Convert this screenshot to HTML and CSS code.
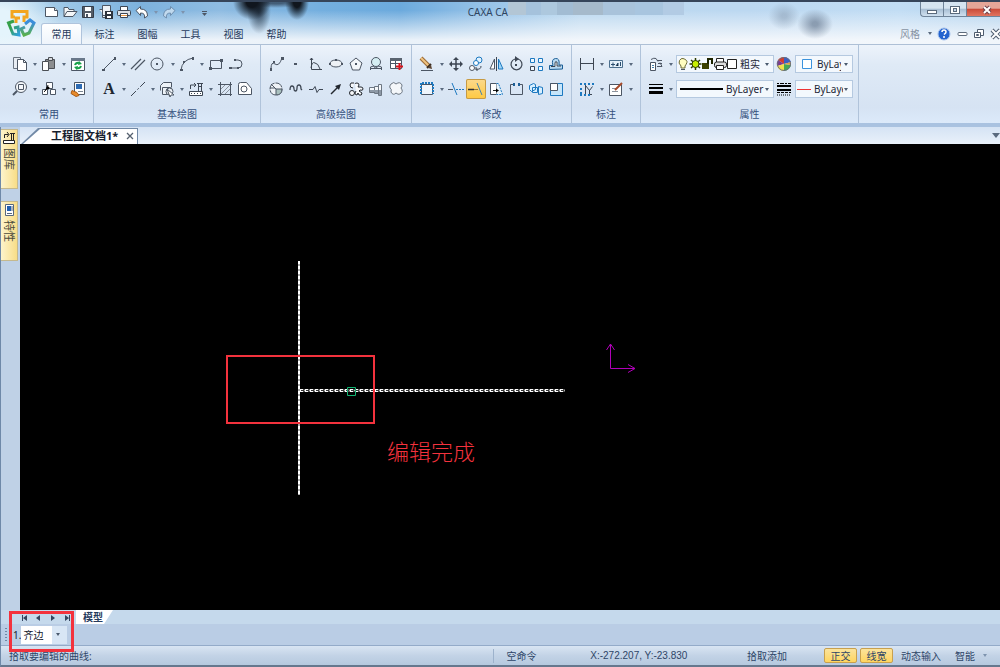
FILE: index.html
```html
<!DOCTYPE html>
<html lang="zh-CN">
<head>
<meta charset="utf-8">
<title>CAXA CAD</title>
<link rel="stylesheet" href="styles.css">
</head>
<body>
<div class="app">
<header class="titlebar">
  <svg class="logo" viewBox="0 0 32 32" aria-hidden="true"><defs><linearGradient id="lg" x2="1" y2="1"><stop offset=".3" stop-color="#35a04a"/><stop offset="1" stop-color="#2f9fe0"/></linearGradient><linearGradient id="lb" x2="0" y2="1"><stop offset=".2" stop-color="#3b8edb"/><stop offset="1" stop-color="#58b04c"/></linearGradient></defs><g fill="none" stroke-width="3"><path stroke="#f3a51f" d="M9.500 12.500V11H8V5.500h15V11h-3v5M12 17v-5h4"/><path stroke="url(#lg)" d="M10 15 4.500 17 9 28l6 1-1-8-4 1"/><path stroke="url(#lb)" d="m21 18 5-4 4 3-5 10-5 2-3-6 4-2"/></g></svg>
  <div class="titlemain">
    <div class="toprow">
      <div class="quick">
        <button class="qb" aria-label="新建"><svg viewBox="0 0 18 18"><path fill="#fff" stroke="#4c5664" d="M2.500 4.500h9l3 3v6h-12z"/><path fill="#dfe5ec" stroke="#4c5664" d="M11.500 4.500v3h3"/></svg></button>
        <button class="qb" aria-label="打开"><svg viewBox="0 0 18 18"><path fill="#f4f6f8" stroke="#4c5664" d="M3 13.500V4.500h4l1 2h5v2M3 13.500l3-5h10l-4 5z"/></svg></button>
        <button class="qb" aria-label="保存"><svg viewBox="0 0 18 18"><path fill="#535b66" stroke="#343c48" d="M3.500 3.500h11v11h-11z"/><path fill="#fff" d="M6 4h6v4H6zM6 10h6v4H6z"/><path fill="#4c5664" d="M7 11h2v3H7z"/></svg></button>
        <button class="qb" aria-label="另存为"><svg viewBox="0 0 18 18"><path fill="#eef2f6" stroke="#4c5664" d="M5.500 2.500h8v10h-8zM2.500 6.500h3v8h3"/><path fill="#2c323c" d="M8 8h8v8H8z"/><path fill="#fff" d="M10 9h4v2h-4zM10 13h4v2h-4z"/></svg></button>
        <button class="qb" aria-label="打印"><svg viewBox="0 0 18 18"><path fill="#fff" stroke="#3d4653" d="M5.500 3.500h7v4h-7z"/><rect x="2.500" y="7.500" width="13" height="5" rx="1" fill="#dbe1e8" stroke="#3d4653"/><path fill="#fff" stroke="#3d4653" d="M5.500 10.500h7v4h-7z"/><path stroke="#e59645" d="M6 12.500h6"/></svg></button>
        <button class="qb" aria-label="撤销"><svg viewBox="0 0 18 18"><path fill="#fff" stroke="#4c5664" d="M3 7.500 7.500 3.500v2.500q7 0 7 7l-3 2q1-5-4-5v2.500z"/></svg></button>
        <span class="caret faint"></span>
        <button class="qb dim" aria-label="重做"><svg viewBox="0 0 18 18"><path fill="#cfe2f2" stroke="#6885a4" d="M15 7.500 10.500 3.500v2.500q-7 0-7 7l3 2q-1-5 4-5v2.500z"/></svg></button>
        <span class="caret faint"></span>
        <button class="qb more" aria-label="自定义快速访问"><svg viewBox="0 0 18 18"><path stroke="#4c5664" d="M7 8.500h5"/><path fill="#4c5664" d="M7 10h5l-2.500 3z"/></svg></button>
      </div>
      <div class="caption">CAXA CA</div>
      <div class="mosaic"></div>
      <div class="winctl">
        <button aria-label="最小化"><svg viewBox="0 0 18 16"><rect x="4.500" y="8.500" width="9" height="3" fill="#fff" stroke="#5b6b7d"/></svg></button>
        <button aria-label="最大化"><svg viewBox="0 0 18 16"><rect x="4.500" y="4.500" width="9" height="7" fill="#fff" stroke="#5b6b7d"/><rect x="7.500" y="6.500" width="3" height="3" fill="#c7d8e8" stroke="#5b6b7d"/></svg></button>
        <button class="close" aria-label="关闭"><svg viewBox="0 0 18 16"><path stroke="#71404a" stroke-width="4" d="m6 5 6 6M12 5l-6 6"/><path stroke="#fff" stroke-width="2" d="m6 5 6 6M12 5l-6 6"/></svg></button>
      </div>
    </div>
    <nav class="tabs">
      <button class="tab on">常用</button><button class="tab">标注</button><button class="tab">图幅</button><button class="tab">工具</button><button class="tab">视图</button><button class="tab">帮助</button>
      <div class="tabright">
        <button class="style">风格</button><span class="caret"></span>
        <button class="tb" aria-label="帮助"><svg viewBox="0 0 16 16"><circle cx="8" cy="8" r="6" fill="#2464cf" stroke="#a7c3ec"/><path d="M6 6q0-2 2-2t2 2q0 1-2 2.500M8 10v2" fill="none" stroke="#fff" stroke-width="1.500"/></svg></button>
        <button class="tb" aria-label="最小化文档"><svg viewBox="0 0 16 16"><rect x="4" y="6.500" width="9" height="3" rx="1" fill="#fff" stroke="#5d6b7c"/></svg></button>
        <button class="tb" aria-label="还原文档"><svg viewBox="0 0 16 16"><g fill="#fff" stroke="#4e5c6e"><path d="M6.500 3.500h6v6h-6z"/><path d="M3.500 6.500h6v5h-6z"/><path d="M5.500 8.500h2v1h-2z"/></g></svg></button>
        <button class="tb" aria-label="关闭文档"><svg viewBox="0 0 16 16"><path stroke="#4e5c6e" stroke-width="4" d="m4 4 8 8M12 4l-8 8"/><path stroke="#fff" stroke-width="2" d="m4 4 8 8M12 4l-8 8"/></svg></button>
      </div>
    </nav>
  </div>
</header>

<section class="ribbon">
  <div class="group first"><div class="tools">
    <div class="line">
      <button class="ib" aria-label="复制"><svg viewBox="0 0 20 20"><path fill="#e8edf3" stroke="#6c7682" d="M3.500 3.500h7v11h-7z"/><path fill="#fff" stroke="#4c5664" d="M7.500 5.500h6l3 3v8h-9z"/><path fill="none" stroke="#4c5664" d="M13.500 5.500v3h3"/></svg></button><span class="caret"></span>
      <button class="ib" aria-label="粘贴"><svg viewBox="0 0 20 20"><path fill="#8b8d8f" stroke="#4b4f55" d="M6.500 5.500h9v9h-9z"/><path fill="#d7dade" stroke="#4b4f55" d="M9.500 3.500h4v3h-4z"/><path fill="#fff" stroke="#4b4f55" d="M3.500 7.500h6v9h-6z"/></svg></button><span class="caret"></span>
      <button class="ib" aria-label="刷新"><svg viewBox="0 0 20 20"><path fill="#fff" stroke="#4c5664" d="M3.500 4.500h13v12h-13z"/><path fill="#69788a" d="M3 4h14v3H3z"/><path fill="none" stroke="#18a048" stroke-width="2" d="M7 11q1-3 5-2M13 12q-1 3-5 2"/><path fill="#18a048" d="m11 7 3 3-4 1zM9 16l-3-3 4-1z"/></svg></button>
    </div>
    <div class="line">
      <button class="ib" aria-label="缩放"><svg viewBox="0 0 20 20"><circle cx="11" cy="8" r="5.500" fill="#f4f7fa" stroke="#4c5664"/><path stroke="#4c5664" stroke-width="2" d="m7 12-4 4"/><path fill="none" stroke="#4c5664" d="M8.500 5.500h5v5h-5z"/></svg></button><span class="caret"></span>
      <button class="ib" aria-label="块"><svg viewBox="0 0 20 20"><g fill="#fff" stroke="#4c5664"><path d="M7.500 3.500h6v6h-6z"/><path d="M3.500 10.500h5v5h-5zM11.500 10.500h5v5h-5z"/></g><path stroke="#222" d="m9 6-1 4-3 3"/><circle cx="9" cy="9" r="1.500"/></svg></button><span class="caret"></span>
      <button class="ib" aria-label="特性匹配"><svg viewBox="0 0 20 20"><path fill="#fff" stroke="#4c5664" d="M6.500 3.500h10v12h-10z"/><path fill="#2d6bb3" d="M8 5h6v5H8z"/><path stroke="#7b8692" d="M10 12.500h5"/><path fill="#e88b2b" stroke="#a85b16" d="M4 11.500l5 2 2 3-3 1-5-3z"/></svg></button>
    </div></div><div class="gname">常用</div>
  </div>
  <div class="group"><div class="tools">
    <div class="line">
      <button class="ib" aria-label="直线"><svg viewBox="0 0 20 20"><path stroke="#4c5664" d="M4 16 16 4"/><path fill="#4c5664" d="M3 15h3v2H3zM15 3h2v3h-2z"/></svg></button><span class="caret"></span>
      <button class="ib" aria-label="平行线"><svg viewBox="0 0 20 20"><path stroke="#4c5664" stroke-width="1.200" d="M3 15 13 5M7 16 17 6"/></svg></button>
      <button class="ib" aria-label="圆"><svg viewBox="0 0 20 20"><circle cx="9" cy="10" r="6" fill="none" stroke="#4c5664"/><path fill="#4c5664" d="M8 9h2v2H8z"/></svg></button><span class="caret"></span>
      <button class="ib" aria-label="圆弧"><svg viewBox="0 0 20 20"><path fill="none" stroke="#4c5664" d="M4 16Q5 6 16 4"/><path fill="#4c5664" d="M3 15h3v2H3zM15 3h2v3h-2zM6 7h2v2H6z"/></svg></button><span class="caret"></span>
      <button class="ib" aria-label="矩形"><svg viewBox="0 0 20 20"><path fill="none" stroke="#4c5664" d="M4.500 6.500h11v8h-11z"/><path fill="#4c5664" d="M14 5h3v3h-3zM3 13h3v3H3z"/></svg></button>
      <button class="ib" aria-label="多段线"><svg viewBox="0 0 20 20"><path fill="none" stroke="#4c5664" d="M9 6h3q4 0 4 4t-4 4H5"/><path fill="#4c5664" d="M8 5h2v2H8zM3 13h3v2H3zM11 13h2v2h-2z"/></svg></button>
    </div>
    <div class="line">
      <button class="ib letter">A</button><span class="caret"></span>
      <button class="ib" aria-label="中心线"><svg viewBox="0 0 20 20"><path stroke="#3d4653" stroke-dasharray="7 2 2 2" d="M3 17 17 3"/></svg></button><span class="caret"></span>
      <button class="ib" aria-label="块插入"><svg viewBox="0 0 20 20"><g fill="#edf2f7" stroke="#4c5664"><path d="M3.500 11.500v-5l3-3h8v5"/><path d="M5.500 8.500h8v7h-8z"/><circle cx="12.500" cy="12.500" r="3.500"/></g><path fill="#fff" stroke="#4c5664" d="m10 10 7 6h-3l-1 2z"/></svg></button><span class="caret"></span>
      <button class="ib" aria-label="图库"><svg viewBox="0 0 20 20"><path fill="none" stroke="#3d4653" d="M4.500 10v-4h5M8 4l2 2-2 2M11 4.500h6M12.500 5v7M15.500 5v7M12 7.500h4"/><path fill="#fff" stroke="#3d4653" d="M3.500 12.500h13v4h-13z"/><path stroke="#3d4653" stroke-dasharray="1 2" d="M5 14.500h11"/></svg></button><span class="caret"></span>
      <button class="ib" aria-label="剖面线"><svg viewBox="0 0 20 20"><path fill="none" stroke="#4c5664" d="M5.500 3v14M15.500 3v14M3 5.500h14M3 15.500h14"/><path stroke="#8a939e" d="m6 10 4-4M6 15l9-9M10 15l5-5"/></svg></button>
      <button class="ib" aria-label="局部放大"><svg viewBox="0 0 20 20"><path fill="#fff" stroke="#4c5664" d="M3.500 5.500q0-2 2-2h6l5 6v6h-13z"/><circle cx="9" cy="10" r="3" fill="none" stroke="#4c5664"/></svg></button>
    </div></div><div class="gname">基本绘图</div>
  </div>
  <div class="group"><div class="tools">
    <div class="line">
      <button class="ib" aria-label="样条"><svg viewBox="0 0 20 20"><path fill="none" stroke="#4c5664" d="M5 15Q5 7 9 10t7-6"/><path fill="#4c5664" d="M4 14h2v3H4zM15 3h3v3h-3zM7 7h2v2H7z"/></svg></button>
      <button class="ib" aria-label="点"><svg viewBox="0 0 20 20"><path fill="#4c5664" d="M8 9h3v2H8z"/></svg></button>
      <button class="ib" aria-label="公式曲线"><svg viewBox="0 0 20 20"><path fill="none" stroke="#3d4653" d="M5.500 4v11.500H16M4 6l1.500-2L7 6M5 14q1-7 4-5 3 0 5 6"/></svg></button>
      <button class="ib" aria-label="椭圆"><svg viewBox="0 0 20 20"><ellipse cx="10" cy="9.500" rx="6" ry="3.500" fill="#eef2f6" stroke="#4c5664"/><path fill="#4c5664" d="M3 9h2v2H3zM15 9h2v2h-2zM9 5h2v2H9z"/></svg></button>
      <button class="ib" aria-label="多边形"><svg viewBox="0 0 20 20"><path fill="#f3f6f9" stroke="#4c5664" d="m10 4 6 5-2.500 7h-7L4 9z"/><path fill="#4c5664" d="M9 9h2v2H9z"/></svg></button>
      <button class="ib" aria-label="圆弧拟合"><svg viewBox="0 0 20 20"><circle cx="10" cy="8" r="4.500" fill="#d5eef3" stroke="#4c5664"/><path fill="none" stroke="#4c5664" d="M4.500 16v-3l3-1q2 4 5 0l3 1v3M4 14.500h12"/></svg></button>
      <button class="ib" aria-label="表格"><svg viewBox="0 0 20 20"><path fill="#fff" stroke="#4c5664" d="M4.500 4.500h11v10h-11zM4 9.500h11M9.500 7v7"/><path fill="#5a6470" d="M4 4h12v3H4z"/><path stroke="#d8141e" stroke-width="2" d="M13.500 9v7M10 12.500h7"/></svg></button>
    </div>
    <div class="line">
      <button class="ib" aria-label="圆弧槽"><svg viewBox="0 0 20 20"><circle cx="10" cy="10" r="6" fill="#eef2f6" stroke="#4c5664" stroke-dasharray="8 1"/><path fill="#a9c0be" stroke="#4c5664" d="M10 10h6q0 6-6 6z"/><path fill="none" stroke="#4c5664" d="m5 5 5 5M4 9h5"/></svg></button>
      <button class="ib" aria-label="波浪线"><svg viewBox="0 0 20 20"><path fill="none" stroke="#3d4653" stroke-width="1.300" d="M4 11q0-4 2-4t2 3q0 2 1.500 2t1.500-3q0-3 2-3t2 4l1 1"/></svg></button>
      <button class="ib" aria-label="折断线"><svg viewBox="0 0 20 20"><path fill="none" stroke="#3d4653" d="M3 10.500h4l2-3 2 6 2-3h4"/></svg></button>
      <button class="ib" aria-label="箭头"><svg viewBox="0 0 20 20"><path stroke="#22272e" stroke-width="1.500" d="m5 15 7-7"/><path fill="#22272e" d="m15 5-2 6-4-4z"/></svg></button>
      <button class="ib" aria-label="齿轮"><svg viewBox="0 0 20 20"><g fill="#f7f9fb" stroke="#22272e"><path d="M9 5q0-1 2-1t2 2l-1 2h3q2 0 2 2t-3 1l-1 1 3 2q0 3-3 2l-1-2-1 2q-2 0-2-2l1-2"/><circle cx="6" cy="14" r="2.500"/><path d="M8 4Q4 3 4 6t3 3"/></g></svg></button>
      <button class="ib" aria-label="轴"><svg viewBox="0 0 20 20"><path fill="#f4f7fa" stroke="#6c7682" d="M3.500 8.500h5v5h-5zM8.500 7.500h4v7h-4zM12.500 5.500h3v11h-3z"/><path fill="#8e99a6" d="M4 11h5v2H4zM9 11h3v3H9zM13 11h2v5h-2z"/></svg></button>
      <button class="ib" aria-label="云线"><svg viewBox="0 0 20 20"><path fill="#f4f7fa" stroke="#6c7682" d="M5 5q3-3 5 0 4-3 6 1 0 2-1 3 3 4-1 6-2 1-4-1-3 3-5-1 1-3-1-4-1-2 1-4z"/></svg></button>
    </div></div><div class="gname">高级绘图</div>
  </div>
  <div class="group"><div class="tools">
    <div class="line">
      <button class="ib" aria-label="删除"><svg viewBox="0 0 20 20"><path stroke="#9b6a38" stroke-width="4" d="m4 4 8 8"/><path stroke="#f0c481" stroke-width="2" d="m4 4 8 8"/><path stroke="#3a2c20" stroke-width="2" d="m10 14 4-4"/><path fill="#5b4330" d="m11 14 3-3 1 4z"/><path stroke="#4c5664" d="M4 16.500h12"/></svg></button><span class="caret"></span>
      <button class="ib" aria-label="平移"><svg viewBox="0 0 20 20"><path stroke="#3d4653" stroke-width="1.500" d="M10 4v12M4 10h12"/><path fill="#3d4653" d="m10 3 3 3H7zM10 17l3-3H7zM3 10l3-3v6zM17 10l-3-3v6z"/></svg></button>
      <button class="ib" aria-label="平移复制"><svg viewBox="0 0 20 20"><circle cx="13" cy="6" r="3" fill="#e1f2ff" stroke="#1d79c0"/><circle cx="10" cy="9" r="2.500" fill="#fff" stroke="#1d79c0"/><circle cx="6" cy="14" r="2.500" fill="#fff" stroke="#4c5664"/><path fill="none" stroke="#3d4653" d="M10 15q5 1 5-3M10 13v3h2"/></svg></button>
      <button class="ib" aria-label="镜像"><svg viewBox="0 0 20 20"><path fill="#fff" stroke="#4c5664" d="M8.500 5v10H4z"/><path fill="#9ed5f7" stroke="#1d79c0" d="M12.500 5v10H17z"/><path stroke="#3d4653" d="M10.500 3v14"/></svg></button>
      <button class="ib" aria-label="旋转"><svg viewBox="0 0 20 20"><path fill="none" stroke="#3d4653" stroke-width="1.200" d="M9 5a5.500 5.500 0 1 0 3 0"/><path fill="#3d4653" d="M9 2l4 3-4 3zM9 10h2v2H9z"/></svg></button>
      <button class="ib" aria-label="阵列"><svg viewBox="0 0 20 20"><g fill="#eff8ff" stroke="#1d79c0"><path d="M4.500 4.500h4v4h-4zM12.500 4.500h4v4h-4zM12.500 12.500h4v4h-4z"/><path stroke="#3d4653" d="M4.500 12.500h4v4h-4z"/></g></svg></button>
      <button class="ib" aria-label="偏移"><svg viewBox="0 0 20 20"><path fill="#b6d9f2" stroke="#1d5f96" d="M3.500 15.500v-4H7Q5 5 9.500 4.500T13 11h3.500v4z"/><path fill="#fff" stroke="#3d4653" d="M5 12.500h4V9q0-2 2-1v4h4"/></svg></button>
    </div>
    <div class="line">
      <button class="ib" aria-label="拉伸"><svg viewBox="0 0 20 20"><path fill="#eef5fc" stroke="#4c5664" d="M4.500 5.500h11v10h-11z"/><path fill="none" stroke="#1d79c0" stroke-width="2" stroke-dasharray="2 1" d="M4 15V4h12v11"/></svg></button><span class="caret"></span>
      <button class="ib" aria-label="裁剪"><svg viewBox="0 0 20 20"><path stroke="#1d79c0" d="m6 4 5 12"/><path stroke="#4c5664" d="M2 10.500h5"/><path stroke="#1d79c0" stroke-dasharray="2 1" d="M10 10.500h8"/></svg></button>
      <button class="ib picked" aria-label="齐边"><svg viewBox="0 0 20 20"><path stroke="#333" stroke-width="1.500" d="M2 10.500h6"/><path stroke="#8d7741" d="M8 10.500h4"/><path stroke="#4382ad" d="m11 4 5 12"/></svg></button>
      <button class="ib" aria-label="过渡"><svg viewBox="0 0 20 20"><path fill="#fff" stroke="#4c5664" d="M4.500 4.500h6v11h-6z"/><path fill="#e7f4fd" stroke="#1d79c0" stroke-dasharray="2 1" d="M10.500 4.500h2l4 11h-6"/><path stroke="#222" d="M7 11.500h5"/><path d="m13 11.500-3-2v4z"/></svg></button>
      <button class="ib" aria-label="打断"><svg viewBox="0 0 20 20"><path fill="none" stroke="#4c5664" d="M7 5.500H4.500v10h12v-10H14"/><path fill="#1d5f96" d="M7 4h2v3H7zM12 4h2v3h-2z"/></svg></button>
      <button class="ib" aria-label="分解"><svg viewBox="0 0 20 20"><g fill="#d8efff" stroke="#1d79c0"><path d="m3.500 6.500 4-2 2 1v5l-4 2-2-2zM6.500 8.500h5v5h-5zM12.500 7.500l4 1v6l-4 1z"/></g></svg></button>
      <button class="ib" aria-label="缩放图形"><svg viewBox="0 0 20 20"><path fill="#c6e5fa" stroke="#1d79c0" d="M4.500 4.500h12v12h-12z"/><path fill="#fff" stroke="#4c5664" d="M4.500 4.500h7v7h-7z"/></svg></button>
    </div></div><div class="gname">修改</div>
  </div>
  <div class="group"><div class="tools">
    <div class="line">
      <button class="ib" aria-label="尺寸"><svg viewBox="0 0 20 20"><path fill="none" stroke="#3d4653" d="M3.500 4v12M16.500 4v12M4 9.500h12"/></svg></button><span class="caret"></span>
      <button class="ib" aria-label="公差"><svg viewBox="0 0 20 20"><path fill="#e4f0fa" stroke="#4b6f8e" d="M3.500 6.500h13v7h-13z"/><path stroke="#2b4f70" d="M5 10.500h4M7 8.500v4M10 12l2-3v3M14.500 8v4"/></svg></button><span class="caret"></span>
    </div>
    <div class="line">
      <button class="ib" aria-label="坐标标注"><svg viewBox="0 0 20 20"><path fill="none" stroke="#3d4653" d="M8.500 5v11M8.500 6.500l4 5 3-4M12.500 11v4.500H15"/><path stroke="#1d79c0" stroke-width="2" stroke-dasharray="2 2" d="M3 5h14M4 9v8M3 16h12"/></svg></button><span class="caret"></span>
      <button class="ib" aria-label="标注编辑"><svg viewBox="0 0 20 20"><path fill="#fff" stroke="#4c5664" d="M3.500 5.500h12v11h-12z"/><path stroke="#8a939e" d="M6 9.500h4M6 12.500h6"/><path stroke="#a64a2a" stroke-width="2" d="m9 11 7-7"/></svg></button><span class="caret"></span>
    </div></div><div class="gname">标注</div>
  </div>
  <div class="group"><div class="tools">
    <div class="line">
      <button class="ib" aria-label="图层"><svg viewBox="0 0 20 20"><path fill="#fff" stroke="#4c5664" d="M4.500 8.500h5v8h-5z"/><path fill="none" stroke="#4c5664" d="M5 5.500q3-2 5-1l2 3M11 6.500h5M12 9.500h4M11 12.500h5l-2-4"/><path stroke="#4382ad" d="M6 11.500h2M6 13.500h2"/></svg></button><span class="caret"></span>
      <label class="combo wide"><svg class="layer" viewBox="0 0 60 16" aria-hidden="true"><path fill="#fffdc0" stroke="#6c6a36" d="M4 10Q1 7 2.500 4.500T6 2.500t3.500 2T8 10v2H4z"/><path stroke="#4c5664" d="M4 13.500h4"/><path stroke="#2d3c00" stroke-width="1.500" d="M18.500 2v12M12.500 8h12M14 4l9 8M23 4l-9 8"/><circle cx="18.500" cy="8" r="3.500" fill="#c8f000" stroke="#2d3c00"/><path fill="#3b4100" d="M25 7h7v6h-7z"/><path fill="none" stroke="#1f2500" stroke-width="2" d="M31 8V3h4v5"/><path fill="#fff" stroke="#222" d="M39.500 2.500h7v4h-7z"/><rect x="37.500" y="6" width="12" height="5.500" rx="2" fill="#ddd" stroke="#222"/><path fill="#fff" stroke="#222" d="M39.500 9.500h7v4h-7z"/><path fill="#fff" stroke="#222" d="M50.500 3.500h9v9h-9z"/></svg><select aria-label="图层"><option>粗实</option></select></label>
      <button class="ib" aria-label="颜色"><svg viewBox="0 0 20 20"><path fill="#d63c2e" d="M10 10 4 6q2-3 6-3z"/><path fill="#3b5fc4" d="M10 10V3q5 0 7 5z"/><path fill="#7c3a92" d="M10 10 3 12q-1-3 1-6z"/><path fill="#f2df4a" d="M10 10l-7 2q2 5 7 5z"/><path fill="#45a954" d="M10 10v7q6-1 7-6z"/><path fill="#e8a23b" d="m10 10 7 1V8z"/><circle cx="10" cy="10" r="6.500" fill="none" stroke="#6b6f7a"/></svg></button>
      <label class="combo color"><svg class="swatch" viewBox="0 0 12 12" aria-hidden="true"><path fill="#fff" stroke="#3b93dd" d="M1.500 1.500h9v9h-9z"/></svg><select aria-label="颜色"><option>ByLayer</option></select></label>
    </div>
    <div class="line">
      <button class="ib" aria-label="线宽"><svg viewBox="0 0 20 20"><path stroke="#000" d="M3 5.500h14"/><path stroke="#000" stroke-width="2" d="M3 9h14"/><path stroke="#000" stroke-width="3" d="M3 13.500h14"/></svg></button><span class="caret"></span>
      <label class="combo wide"><span class="sample"></span><select aria-label="线宽"><option>ByLayer</option></select></label>
      <button class="ib" aria-label="线型"><svg viewBox="0 0 20 20"><path stroke="#000" stroke-dasharray="2 1 4 1" d="M3 4.500h14"/><path stroke="#000" stroke-width="2" d="M3 7h14M3 11h14" /><path stroke="#000" stroke-dasharray="3 1" d="M3 13.500h14"/><path stroke="#000" stroke-dasharray="1 1" d="M3 16h14"/></svg></button>
      <label class="combo type"><span class="sample red"></span><select aria-label="线型"><option>ByLayer</option></select></label>
    </div></div><div class="gname">属性</div>
  </div>
</section>

<main class="work">
  <aside class="side">
    <button class="sidetab"><svg viewBox="0 0 16 16"><path fill="none" stroke="#222" d="M3.500 8V4.500h4M6 2l2 2.500L6 7M9 3.500h5M10.500 4v6M12.500 4v6"/><path fill="#fff" stroke="#222" d="M2.500 10.500h11v3h-11z"/></svg><span>图库</span></button>
    <button class="sidetab"><svg viewBox="0 0 16 16"><path fill="#fff" stroke="#57687c" d="M4.500 2.500h8v11h-8z"/><path fill="#1f5eb0" d="M6 4h4v5H6z"/><path stroke="#57687c" d="M6 11.500h5M11 4v5"/></svg><span>特性</span></button>
  </aside>
  <div class="docarea">
    <div class="docbar">
      <div class="doctab"><button class="docname">工程图文档1*</button><button class="docclose" aria-label="关闭文档标签"><svg viewBox="0 0 8 8"><path stroke="#55606e" stroke-width="1.300" d="m1 1 6 6M7 1 1 7"/></svg></button></div>
      <button class="doclist" aria-label="文档列表"><span class="caret big"></span></button>
    </div>
    <div class="canvas">
      <svg class="drawing" width="640" height="380" viewBox="0 0 640 380" aria-hidden="true">
        <path stroke="#aaa" stroke-width="2" d="M279 117v234M280 246.500h265"/>
        <path stroke="#fff" stroke-width="2" stroke-dasharray="3 2" d="M279 117v234"/>
        <path stroke="#fff" stroke-width="3" stroke-dasharray="3 2" d="M280 246.500h265"/>
        <path stroke="#333" stroke-dasharray="3 2" d="M281 246.500h264"/>
        <path fill="none" stroke="#13b573" d="M327.500 243.500h8v8h-8z"/>
        <path fill="none" stroke="#f3323d" stroke-width="2" d="M207 212h147v67H207z"/>
        <path fill="none" stroke="#b000b8" d="M590.500 200v24.500H615M586.500 206l4-6 4 6M608 220.500l7 4-7 4"/>
      </svg>
      <div class="note">编辑完成</div>
    </div>
  </div>
</main>

<footer class="bottom">
  <div class="sheets">
    <button class="nav" aria-label="首个"><svg viewBox="0 0 14 10"><path fill="#33445f" d="M4 2h1v6H4zM9 2v6L5 5z"/></svg></button>
    <button class="nav" aria-label="上一个"><svg viewBox="0 0 14 10"><path fill="#33445f" d="M8 2v6L4 5z"/></svg></button>
    <button class="nav" aria-label="下一个"><svg viewBox="0 0 14 10"><path fill="#33445f" d="M5 2v6l4-3z"/></svg></button>
    <button class="nav" aria-label="末个"><svg viewBox="0 0 14 10"><path fill="#33445f" d="M9 2h1v6H9zM5 2v6l4-3z"/></svg></button>
    <button class="sheet">模型</button>
  </div>
  <div class="command"><span class="grip"></span><label for="mode">1.</label><div class="mode"><select id="mode"><option>齐边</option></select></div></div>
  <div class="status">
    <div class="prompt">拾取要编辑的曲线:</div>
    <div class="cmdname">空命令</div>
    <div class="coords">X:-272.207, Y:-23.830</div>
    <div>拾取添加</div>
    <div class="modes"><button class="toggle">正交</button><button class="toggle">线宽</button><button class="plain">动态输入</button><button class="plain">智能</button><span class="caret faint"></span></div>
  </div>
  <div class="mark"></div>
</footer>
</div>
</body>
</html>
```
FILE: styles.css
```css
* { box-sizing: border-box; }
html, body { height: 100%; }
body {
  margin: 0;
  font: 10px/14px "Noto Sans", "Noto Sans CJK SC", sans-serif;
  color: #263a5c;
  background: #bed0e6;
  overflow: hidden;
}
button, select {
  font: inherit;
  color: inherit;
  background: none;
  border: 0;
  padding: 0;
  margin: 0;
}
select { appearance: none; outline: 0; }
svg { display: block; }
.app { display: flex; flex-direction: column; height: 100vh; }

.caret {
  flex: none;
  width: 9px;
  height: 6px;
  display: flex;
  justify-content: center;
  align-items: center;
}
.caret::before {
  content: "";
  border: 2px solid transparent;
  border-top: 3px solid #5a6a7e;
  border-bottom: 0;
}
.caret.faint::before { border-top-color: #7d93ae; }
.caret.big::before { border-width: 5px 4px 0; }

.titlebar {
  flex: none;
  display: flex;
  border-top: 2px solid #36455a;
  background:
    radial-gradient(ellipse 19px 18px at 252px 0, #10161e 30%, #10161e00),
    radial-gradient(ellipse 12px 24px at 259px 8px, #1c2938cc 10%, #1c293800),
    radial-gradient(ellipse 12px 18px at 297px 0, #10161e 30%, #10161e00),
    radial-gradient(ellipse 30px 6px at 276px 0, #35495fcc 30%, #35495f00),
    radial-gradient(ellipse 18px 15px at 815px 22px, #66788faa 15%, #66788f00),
    radial-gradient(ellipse 16px 14px at 784px 14px, #8fa4ba99 15%, #8fa4ba00),
    radial-gradient(ellipse 60px 40px at 0 20px, #e4f4fc 30%, #e4f4fc00),
    linear-gradient(#fff0 20%, #f7f9fce6 90%),
    linear-gradient(90deg, #b6d7ee, #7db2dd 14%, #8fbce2 22%, #74afdf 32%, #6caadd 40%, #94c1e7 48%, #bcd9f0 58%, #bcd8f1 75%, #c2ddf4 90%, #b8d6ef);
}
.logo { width: 32px; height: 32px; margin: 4px 4px 0; flex: none; }
.titlemain { flex: 1; min-width: 0; }
.toprow { display: flex; height: 21px; align-items: flex-start; }
.quick { display: flex; align-items: center; padding: 1px 0 0 3px; flex: none; width: 180px; }
.qb { width: 18px; height: 18px; }
.qb.dim { opacity: .8; }
.qb.more { margin-left: 8px; }
.caption { flex: 1 1 288px; text-align: right; padding-top: 3px; color: #2e4460; }
.mosaic {
  flex: 0 0 176px;
  height: 13px;
  background: linear-gradient(90deg, #b3c6d5 0 10%, #a5c2dc 10% 19%, #adc8de 19% 28%, #a2bcd3 28% 37%, #a6bacb 37% 54%, #a9c3db 54% 72%, #a8c5df 72% 88%, #b2cbe4 88%);
}
.winctl { flex: 1 1 316px; display: flex; justify-content: flex-end; }
.winctl button {
  width: 23px;
  height: 15px;
  display: flex;
  justify-content: center;
  border: 1px solid #6e8399;
  border-top: 0;
  border-right: 0;
  background: linear-gradient(#d5e4f1 45%, #a7bed4 50%, #cfe0ef);
}
.winctl button:first-child { border-bottom-left-radius: 4px; }
.winctl .close { width: 34px; background: linear-gradient(#e5a698 45%, #c94a38 50%, #e27560); }
.winctl svg { width: 18px; height: 16px; }
.winctl .close svg { margin-left: 6px; }

.tabs { display: flex; height: 21px; }
.tab { width: 41px; margin: 0 1px; height: 21px; border-radius: 3px 3px 0 0; }
.tab.on { background: linear-gradient(#fff, #eef4fb); border: 1px solid #b0c4dc; border-bottom: 0; }
.tabright { margin-left: auto; display: flex; align-items: center; padding-right: 0; }
.style { color: #8793a3; margin-right: 5px; }
.tb { width: 16px; height: 16px; margin-right: 1px; }
.tb:last-child { margin-right: -4px; }
.tb svg { width: 16px; height: 16px; }
.tb:nth-of-type(2) { margin-left: 2px; margin-right: 2px; }

.ribbon {
  flex: none;
  display: flex;
  height: 83px;
  padding-left: 2px;
  border-top: 1px solid #aec0d6;
  border-bottom: 4px solid #a9c2e0;
  background: linear-gradient(#edf3fb, #dfeaf6 25%, #d6e3f3 80%, #dceafa);
  overflow: hidden;
}
.group {
  display: flex;
  flex-direction: column;
  padding: 9px 5px 0;
  border-right: 1px solid #b0c3da;
}
.group.first { padding-left: 8px; }
.tools { display: grid; gap: 5px; }
.line { display: flex; align-items: center; height: 20px; }
.ib { width: 20px; height: 20px; flex: none; }
.ib svg { width: 20px; height: 20px; }
.ib.letter { font: bold 16px/20px "Liberation Serif", serif; color: #20262f; }
.ib.picked { background: linear-gradient(#fbd98d, #ffc941); box-shadow: inset 0 0 0 1px #c59a45; border-radius: 2px; }
.gname { text-align: center; padding-top: 9px; line-height: 12px; color: #34507c; }
.combo {
  display: flex;
  align-items: center;
  height: 18px;
  background: #f3f8fd;
  border: 1px solid #b5c9e0;
  position: relative;
  overflow: hidden;
  margin-left: 1px;
}
.combo::after, .mode::after {
  content: "";
  position: absolute;
  right: 4px;
  top: 7px;
  border: 2px solid transparent;
  border-top: 3px solid #4a5a6e;
  border-bottom: 0;
}
.combo select { flex: 1; min-width: 0; margin: 0 9px 0 3px; text-overflow: clip; color: #1c2636; }
.combo.wide { width: 98px; }
.combo.color, .combo.type { width: 58px; }
.layer { width: 60px; height: 16px; flex: none; }
.swatch { width: 12px; height: 12px; margin: 0 1px 0 5px; flex: none; }
.combo.color select { margin-right: 11px; }
.sample { width: 43px; height: 2px; background: #000; margin: 0 0 0 3px; flex: none; }
.sample.red { width: 14px; height: 1px; background: #e33; margin-left: 1px; }

.work { flex: 1; min-height: 0; display: flex; }
.side { width: 20px; flex: none; background: #bfd1e6; border-left: 1px solid #6f89a8; padding: 2px 2px 0 0; }
.sidetab {
  display: flex;
  flex-direction: column;
  align-items: center;
  width: 17px;
  height: 60px;
  margin-bottom: 12px;
  border: 1px solid #c5b98e;
  border-left: 0;
  background: linear-gradient(90deg, #fdf4cc, #f8dd87);
  color: #4a4a3c;
}
.sidetab svg { width: 16px; height: 16px; }
.sidetab span { writing-mode: vertical-rl; text-orientation: sideways; margin-top: 2px; font-size: 11px; }
.docarea { flex: 1; min-width: 0; display: flex; flex-direction: column; }
.docbar { flex: none; height: 17px; display: flex; background: linear-gradient(#d5e3f4, #e9f1fa); justify-content: space-between; }
.doctab { display: flex; align-items: center; position: relative; isolation: isolate; padding: 1px 4px 0 30px; margin-left: 1px; }
.doctab::before, .doctab::after { content: ""; position: absolute; inset: 1px 0 0; z-index: -2; background: #7189a6; clip-path: polygon(0 100%, 17px 0, 100% 0, 100% 100%); }
.doctab::after { inset: 2px 1px 0 2px; z-index: -1; background: #fff; }
.docname { font-size: 11px; line-height: 14px; font-weight: bold; color: #16202e; }
.docclose { margin-left: 8px; }
.docclose svg { width: 8px; height: 8px; }
.canvas { flex: 1; min-height: 0; background: #000; position: relative; overflow: hidden; }
.drawing { position: absolute; left: 0; top: 0; }
.note { position: absolute; left: 367px; top: 290px; font: 300 22px/32px "Noto Sans CJK SC", sans-serif; color: #f3323d; white-space: nowrap; }

.bottom { flex: none; position: relative; border-left: 1px solid #6f89a8; border-bottom: 2px solid #66788e; }
.sheets { display: flex; height: 14px; padding-left: 17px; background: #c5d9ec; }
.nav { width: 14px; height: 14px; }
.nav svg { width: 14px; height: 10px; margin-top: 2px; }
.sheet { margin-left: 2px; padding: 0 10px 0 7px; line-height: 14px; font-weight: bold; background: #fff; clip-path: polygon(0 0, 100% 0, 28px 100%, 0 100%); }
.command { display: flex; align-items: center; height: 21px; padding-left: 4px; background: #bacde5; color: #16202e; }
.grip { width: 2px; height: 14px; background: repeating-linear-gradient(#7087a5 0 1px, #bacde500 1px 3px); margin-right: 6px; }
.mode { position: relative; display: flex; align-items: center; width: 46px; height: 18px; background: linear-gradient(90deg, #fff 31px, #d8e6f5 31px); }
.mode select { flex: 1; padding-left: 2px; }
.mode::after { right: 7px; }
.status {
  display: grid;
  grid-template-columns: 493fr 97fr 157fr 77fr 176px;
  align-items: center;
  height: 20px;
  border-top: 1px solid #94abc9;
  background: linear-gradient(#d9e5f3, #c3d3e6 50%, #b6c9df);
  color: #2e4567;
  white-space: nowrap;
}
.prompt { padding-left: 8px; }
.cmdname { padding-left: 12px; border-left: 1px solid #9db2cc; }
.coords { font-family: "Liberation Sans", sans-serif; }
.modes { display: flex; align-items: center; }
.toggle { width: 33px; height: 15px; margin-right: 3px; border: 1px solid #c8a04e; border-radius: 2px; background: linear-gradient(#fbe39c, #ffd55f); line-height: 12px; }
.plain { margin: 0 9px 0 5px; }
.plain + .caret { margin-left: -4px; }
.mark { position: absolute; left: 8px; top: 1px; width: 65px; height: 41px; border: 3px solid #f3323d; pointer-events: none; }
```
